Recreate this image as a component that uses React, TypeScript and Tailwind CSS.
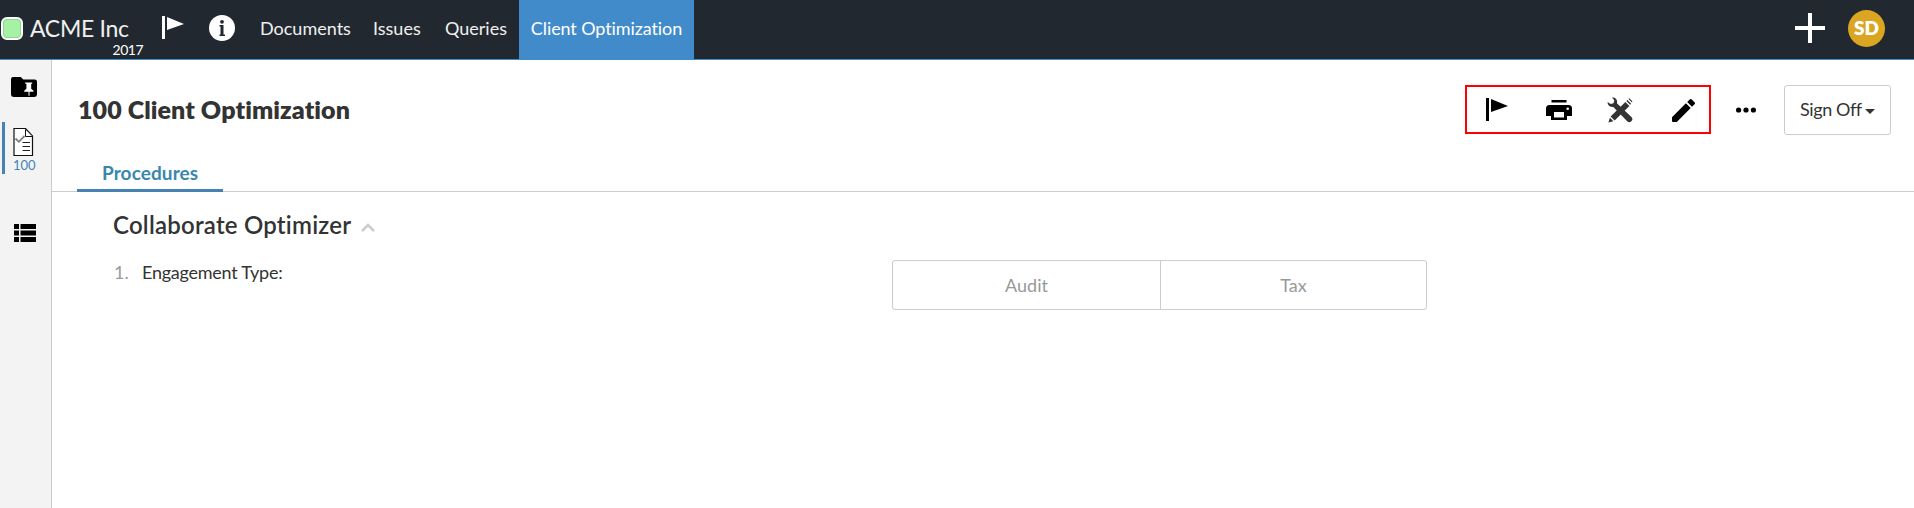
import type { ReactNode } from "react";

function FlagIcon({ className }: { className: string }) {
  return (
    <svg className={className} viewBox="0 0 22 23" width="22" height="23" fill="currentColor">
      <rect x="0" y="0" width="3" height="23" />
      <path d="M5 1 L22 8 L5 14 Z" />
    </svg>
  );
}

function InfoIcon() {
  return (
    <svg viewBox="0 0 26 26" width="26" height="26" className="ml-[25px] shrink-0">
      <circle cx="13" cy="13" r="13" fill="#fff" />
      <circle cx="13" cy="6.8" r="1.9" fill="#22282f" />
      <path d="M10.500 10h4v9.500H16V21h-5.500v-1.500h1V11.500h-1z" fill="#22282f" />
    </svg>
  );
}

function FolderPinIcon() {
  return (
    <svg viewBox="0 0 26 20" width="26" height="20" className="ml-[11px]">
      <path d="M2.2 0h7.6l2.5 2.5h11.2A2.4 2.4 0 0 1 26 5v12.6a2.4 2.4 0 0 1-2.4 2.4H2.4A2.4 2.4 0 0 1 0 17.600V2.200A2.200 2.200 0 0 1 2.200 0z" />
      <path d="M14.200 5.500h7v1.200h-1v5l2.300 2v1h-4v4h-1v-4h-4.300v-1l2.200-2v-5h-1.200z" fill="#fff" />
    </svg>
  );
}

function ChecklistIcon() {
  return (
    <svg viewBox="0 0 21 28" width="21" height="28" fill="none" className="shrink-0">
      <path d="M1 .5h11.500L19.500 8v19.500H1z" fill="#fff" stroke="#111" strokeWidth="1.200" />
      <path d="M12.500 .5V8.500H20" stroke="#111" />
      <path d="M12.500 1.500 19 8" stroke="#777" />
      <path d="M2.500 10.500l3.300 3.300L11.500 8" stroke="#808080" strokeWidth="1.800" />
      <path d="M9.500 14.500h7.500M9.500 18.500h7.500M9.500 22.500h7.500" stroke="#222" />
    </svg>
  );
}

function ListIcon() {
  return (
    <svg viewBox="0 0 22 18" width="22" height="18" className="ml-[14px]">
      <path d="M0 0h5v5H0zM6.500 0H22v5H6.500zM0 6.500h5v5H0zM6.500 6.500H22v5H6.500zM0 13h5v5H0zM6.500 13H22v5H6.500z" />
    </svg>
  );
}

function PrintIcon() {
  return (
    <svg viewBox="0 0 26 20" width="26" height="20" className="ml-[38px]">
      <path d="M5.500 0h15v2.500h-15z" />
      <path
        fillRule="evenodd"
        d="M3.500 5h18.800A3.600 3.600 0 0 1 26 8.600V16h-5v4H5v-4H0V8.600A3.600 3.600 0 0 1 3.500 5zM8 12v5.500h10V12zM21.700 7.500a1.300 1.300 0 1 0 0 2.600 1.300 1.300 0 0 0 0-2.600z"
      />
    </svg>
  );
}

function ToolsIcon() {
  return (
    <svg viewBox="0 0 26 26" width="26" height="26" className="ml-[35px]" fill="#333">
      <path d="M5 .6C8.300 0 10.900 2.900 9.900 6.200L24.400 20.100A2.900 2.900 0 0 1 20.200 24.200L6.300 9.900C3.200 10.700 .3 8.200 .6 4.900L3.500 7l3-.8.800-3z" />
      <path d="M18.400 4.900l4 4L7.600 23.500l-4-4z" />
      <path d="M19.400 4l1-1 3.700 3.700-1 1zM21.500 2.100l.8-.8 3.200 3.200-.8.800z" />
      <path d="M2.900 20.700l3.500 3.500-5 1.300z" />
    </svg>
  );
}

function PencilIcon() {
  return (
    <svg viewBox="0 0 23 23" width="23" height="23" className="ml-[39px]">
      <path d="M0 18.200 13.900 4.300l4.800 4.800L4.800 23H1a1 1 0 0 1-1-1zM15.200 3 17.700.5a1.500 1.500 0 0 1 2.100 0l2.700 2.700a1.500 1.500 0 0 1 0 2.100L20 7.800z" />
    </svg>
  );
}

function NavItem({ className, children }: { className: string; children: ReactNode }) {
  return <a className={`whitespace-nowrap text-[18px] leading-[57px] ${className}`}>{children}</a>;
}

function Header() {
  return (
    <header className="flex h-[60px] shrink-0 border-b border-[#428bca] bg-[#22282f] text-white">
      <div className="mt-[17px] ml-[1px] h-[23px] w-[22px] shrink-0 rounded-[6px] border-2 border-white bg-[#a5f2a5]">
        <div className="h-full w-full rounded-[4px] border border-[#8fd694]" />
      </div>
      <div className="ml-[7px] flex w-[113px] shrink-0 flex-col">
        <span className="mt-[14px] text-[23px] leading-[29px] tracking-[-0.3px] whitespace-nowrap text-[#f0f0f0]">ACME Inc</span>
        <span className="text-right text-[14px] leading-[14px] tracking-[-0.5px]">2017</span>
      </div>
      <FlagIcon className="mt-[16px] ml-[19px] shrink-0" />
      <div className="mt-[15px]">
        <InfoIcon />
      </div>
      <nav className="ml-[25px] flex text-[#f0f0f0]">
        <NavItem className="w-[113px]">Documents</NavItem>
        <NavItem className="w-[72px]">Issues</NavItem>
        <NavItem className="w-[74px]">Queries</NavItem>
        <NavItem className="h-[59px] w-[175px] bg-[#428bca] text-center tracking-[-0.1px] text-white">Client Optimization</NavItem>
      </nav>
      <svg viewBox="0 0 30 30" width="30" height="30" className="mt-[13px] ml-auto shrink-0" fill="#fff">
        <path d="M13 0h4v13h13v4H17v13h-4V17H0v-4h13z" />
      </svg>
      <div className="mt-[10px] mr-[29px] ml-[23px] flex h-[37px] w-[37px] shrink-0 items-center justify-center rounded-full bg-[#daa520] pb-[1px] text-[19px] font-extrabold">
        SD
      </div>
    </header>
  );
}

function Sidebar() {
  return (
    <aside className="flex w-[52px] shrink-0 flex-col border-r border-[#ccc] bg-[#f3f3f3] pt-[17px]">
      <FolderPinIcon />
      <div className="mt-[25px] ml-[2px] flex h-[52px] flex-col border-l-[3px] border-[#4682b4] pt-[6px] pl-[8px]">
        <ChecklistIcon />
        <span className="mt-[2px] text-[13px] leading-[15px] text-[#4682b4]">100</span>
      </div>
      <div className="mt-[50px]">
        <ListIcon />
      </div>
    </aside>
  );
}

function Toolbar() {
  return (
    <div className="ml-auto flex items-start text-black">
      <div className="flex h-[49px] w-[246px] items-start border-2 border-[#f00] pl-[19px]">
        <FlagIcon className="mt-[11px]" />
        <div className="mt-[13px]">
          <PrintIcon />
        </div>
        <div className="mt-[10px]">
          <ToolsIcon />
        </div>
        <div className="mt-[12px]">
          <PencilIcon />
        </div>
      </div>
      <svg viewBox="0 0 20 6" width="20" height="6" className="mt-[22px] ml-[25px]">
        <circle cx="2.600" cy="3" r="2.600" />
        <circle cx="10" cy="3" r="2.600" />
        <circle cx="17.400" cy="3" r="2.600" />
      </svg>
      <button className="mr-[23px] ml-[28px] flex h-[50px] w-[107px] items-center rounded-[3px] border border-[#ccc] pl-[15px] text-[18px] text-[#333]">
        <span className="w-[61px] pb-[2px] tracking-[-0.4px] whitespace-nowrap">Sign Off</span>
        <svg viewBox="0 0 10 5" width="10" height="5" className="mt-[3px] ml-[4px]" fill="#333">
          <path d="M0 0h10L5 5z" />
        </svg>
      </button>
    </div>
  );
}

export default function App() {
  return (
    <div className="flex h-[508px] w-full flex-col overflow-hidden bg-white font-['Lato',sans-serif] text-[#333] [font-variant-ligatures:none]">
      <Header />
      <div className="flex min-h-0 flex-1">
        <Sidebar />
        <main className="flex min-w-0 flex-1 flex-col">
          <div className="flex h-[96px] pt-[25px]">
            <h1 className="ml-[26px] text-[25px] leading-[48px] font-extrabold tracking-[0.1px] whitespace-nowrap">100 Client Optimization</h1>
            <Toolbar />
          </div>
          <div className="flex h-[36px] border-b border-[#ccc] pl-[25px]">
            <div className="h-[36px] w-[146px] border-b-[3px] border-[#4682b4] pl-[25px] text-[19px] leading-[34px] font-bold tracking-[0.1px] text-[#3a87ad]">
              Procedures
            </div>
          </div>
          <div className="flex items-center pt-[17px] pl-[61px]">
            <h2 className="text-[24px] leading-[32px] font-semibold tracking-[0.22px] whitespace-nowrap">Collaborate Optimizer</h2>
            <svg viewBox="0 0 14 9" width="14" height="9" className="mt-[4px] ml-[10px]" fill="none" stroke="#ccc" strokeWidth="2.500">
              <path d="M1 8l6-6 6 6" />
            </svg>
          </div>
          <div className="flex pt-[19px] pl-[62px] text-[18px]">
            <span className="w-[28px] leading-[24px] text-[#999]">1.</span>
            <span className="w-[750px] leading-[24px] tracking-[-0.25px]">Engagement Type:</span>
            <div className="flex h-[50px] w-[535px] rounded-[3px] border border-[#ccc] leading-[48px] text-[#999]">
              <div className="w-[268px] border-r border-[#ccc] text-center">Audit</div>
              <div className="flex-1 text-center">Tax</div>
            </div>
          </div>
        </main>
      </div>
    </div>
  );
}
